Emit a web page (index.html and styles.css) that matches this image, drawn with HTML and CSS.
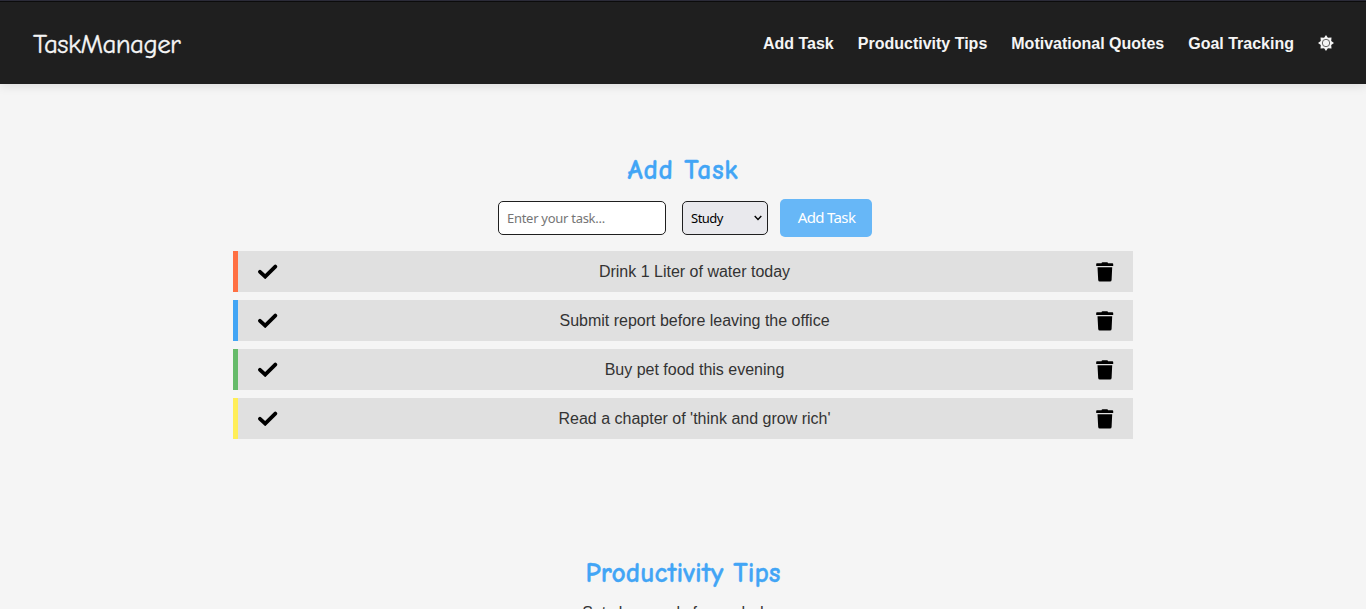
FILE: index.html
```html
<!DOCTYPE html>
<html lang="en">
<head>
<meta charset="utf-8">
<title>TaskManager</title>
<link rel="stylesheet" href="styles.css">
</head>
<body>
<svg class="defs" width="0" height="0">
  <symbol id="check" viewBox="0 0 20 15"><path d="M2 7.8 L7.2 12.6 L17.3 2.6" fill="none" stroke="#000" stroke-width="3.8" stroke-linejoin="miter" stroke-linecap="round"/></symbol>
  <symbol id="trash" viewBox="0 0 18 20"><path d="M5.5 1.2 Q5.7 0.3 6.6 0.3 H11 Q11.9 0.3 12.1 1.2 H16.4 Q17.2 1.2 17.2 2 V4 H0.2 V2 Q0.2 1.2 1 1.2Z M1.5 5.2 H16.2 L15.6 18 Q15.5 19.5 14 19.5 H3.8 Q2.3 19.5 2.2 18Z"/></symbol>
</svg>
<header class="header">
  <div class="logo">TaskManager</div>
  <nav class="nav">
    <a>Add Task</a><a>Productivity Tips</a><a>Motivational Quotes</a><a>Goal Tracking</a>
    <svg class="sun" viewBox="0 0 16 16"><path d="M8 0 L9.9 2.8 L13.5 2.4 L13.2 6.1 L16 8 L13.2 9.9 L13.5 13.5 L9.9 13.2 L8 16 L6.1 13.2 L2.5 13.5 L2.8 9.9 L0 8 L2.8 6.1 L2.5 2.4 L6.1 2.8Z" fill="#f5f5f5"/><circle cx="8" cy="8" r="3.7" fill="#f5f5f5" stroke="#555" stroke-width=".9"/></svg>
  </nav>
</header>
<main>
  <section class="tasks">
    <h2 class="title title-add">Add Task</h2>
    <div class="form">
      <input class="field" type="text" placeholder="Enter your task...">
      <div class="select"><span>Study</span><svg width="8" height="6" viewBox="0 0 8 6"><path d="M.7 1 L4 4.4 L7.3 1" fill="none" stroke="#000" stroke-width="1.4"/></svg></div>
      <button class="add">Add Task</button>
    </div>
    <ul class="list">
      <li class="task orange"><svg class="check"><use href="#check"/></svg><span>Drink 1 Liter of water today</span><svg class="trash"><use href="#trash"/></svg></li>
      <li class="task blue"><svg class="check"><use href="#check"/></svg><span>Submit report before leaving the office</span><svg class="trash"><use href="#trash"/></svg></li>
      <li class="task green"><svg class="check"><use href="#check"/></svg><span>Buy pet food this evening</span><svg class="trash"><use href="#trash"/></svg></li>
      <li class="task yellow"><svg class="check"><use href="#check"/></svg><span>Read a chapter of 'think and grow rich'</span><svg class="trash"><use href="#trash"/></svg></li>
    </ul>
  </section>
  <section class="tips">
    <h2 class="title title-tips">Productivity Tips</h2>
    <p class="tip">Set clear goals for each day.</p>
  </section>
</main>
</body>
</html>
```
FILE: styles.css
```css
* { box-sizing: border-box; }
body { margin: 0; height: 609px; overflow: hidden; background: #f5f5f5; color: #333; font: 16px "Liberation Sans", Arial, sans-serif; }
.defs { display: block; }
.header { height: 84px; padding: 0 32px 0 33px; display: flex; align-items: center; justify-content: space-between; background: #1f1f1f; border-top: 1px solid #2b2b38; box-shadow: inset 0 1px #0c0c0c, 0 2px 10px rgba(0,0,0,.1); color: #f5f5f5; }
.logo { font: 27px/32px "Comic Sans MS", "Comic Neue", Lato, sans-serif; letter-spacing: -.6px; padding-top: 5px; -webkit-text-stroke: .35px #f5f5f5; }
.nav { display: flex; align-items: center; gap: 24px; padding-top: 2px; font-weight: bold; }
.sun { width: 16px; height: 16px; margin-top: -1px; }
.tasks { padding-top: 70px; height: 403px; }
.title { margin: 0; height: 32px; font: bold 27.5px/32px "Comic Sans MS", "Comic Neue", Lato, sans-serif; color: #42a5f5; text-align: center; letter-spacing: .75px; white-space: pre; -webkit-text-stroke: .3px #42a5f5; }
.title-tips { letter-spacing: .05px; }
.form { display: flex; justify-content: center; align-items: center; height: 38px; margin-top: 13px; padding-left: 4px; font-family: "Noto Sans", sans-serif; }
.field { width: 168px; height: 34px; margin: 0 16px 0 0; padding: 0 8px; border: 1px solid #1f1f1f; border-radius: 5px; background: #fff; font: 13px "Noto Sans", sans-serif; letter-spacing: -.28px; }
.field::placeholder { color: #757575; }
.select { width: 86px; height: 34px; margin-right: 12px; padding: 0 5px 0 8px; display: flex; align-items: center; justify-content: space-between; border: 1px solid #1f1f1f; border-radius: 5px; background: #e9e9ed; color: #000; font-size: 13px; letter-spacing: -.5px; }
.add { width: 92px; height: 38px; padding: 0 0 2px 1px; border: 0; border-radius: 5px; background: #67b7f7; color: #fff; font: 15px "Noto Sans", sans-serif; letter-spacing: -.65px; }
.list { width: 900px; margin: 14px auto 0; padding: 0; display: grid; gap: 8px; list-style: none; }
.task { height: 41px; padding: 0 19px 0 20px; display: grid; grid-template-columns: 20px 1fr 18px; align-items: center; border-left: 5px solid; background: #e0e0e0; }
.task span { padding-left: 15px; color: #333; text-align: center; }
.orange { border-color: #ff7043; }
.blue { border-color: #42a5f5; }
.green { border-color: #66bb6a; }
.yellow { border-color: #ffee58; }
.check { width: 20px; height: 15px; }
.trash { width: 18px; height: 20px; }
.tips { padding-top: 70px; }
.tip { margin: 15px 0 0; text-align: center; line-height: 18px; }
```
